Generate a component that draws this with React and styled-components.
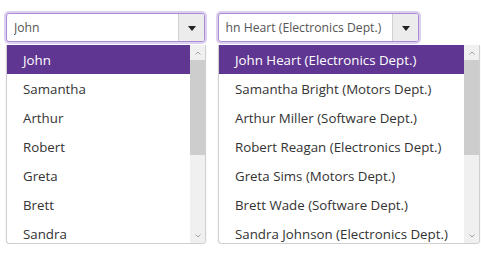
import React from "react";
import styled, { createGlobalStyle } from "styled-components";

const Global = createGlobalStyle`
  html, body { margin: 0; padding: 0; background: #fff; }
  body { font-family: "Open Sans", "Noto Sans", sans-serif; }
`;

const Page = styled.div`
  display: flex;
  align-items: flex-start;
  gap: 12px;
  padding: 13px 0 0 6px;
`;

const Combo = styled.div`
  display: flex;
  flex-direction: column;
  width: ${(p) => p.$listWidth}px;
`;

const Input = styled.div`
  box-sizing: border-box;
  width: ${(p) => p.$width}px;
  height: 29px;
  display: flex;
  border: 1px solid #a98bd4;
  border-radius: 3px;
  box-shadow: 0 0 0 2px #ddd0ef;
  background: #fff;
  overflow: hidden;
`;

const InputText = styled.div`
  flex: 1;
  min-width: 0;
  display: flex;
  padding: 0 6px 0 7px;
`;

const Clip = styled.div`
  flex: 1;
  min-width: 0;
  display: flex;
  align-items: center;
  overflow: hidden;
  white-space: nowrap;
  font-size: 12.2px;
  color: #555;
`;

const ValueText = styled.span`
  flex: none;
  margin-left: ${(p) => -p.$scroll}px;
`;

const ArrowButton = styled.div`
  flex: none;
  width: 25px;
  display: flex;
  align-items: center;
  justify-content: center;
  background: #ececec;
  border-left: 1px solid #d0d0d0;
`;

const Caret = styled.span`
  width: 0;
  height: 0;
  border-left: 4px solid transparent;
  border-right: 4px solid transparent;
  border-top: 5px solid #222;
  margin-top: 1px;
`;

const Popup = styled.div`
  box-sizing: border-box;
  margin-top: 3px;
  height: 199px;
  display: flex;
  border: 1px solid #cfcfcf;
  border-top: none;
  border-radius: 0 0 4px 4px;
  background: #fff;
  overflow: hidden;
  box-shadow: 0 1px 2px rgba(0, 0, 0, 0.08);
`;

const List = styled.ul`
  list-style: none;
  margin: 0;
  padding: 0;
  flex: 1;
  min-width: 0;
  overflow: hidden;
`;

const Item = styled.li`
  height: 29px;
  display: flex;
  align-items: center;
  padding-left: 16px;
  white-space: nowrap;
  font-size: 13.3px;
  color: ${(p) => (p.$selected ? "#fff" : "#333")};
  background: ${(p) => (p.$selected ? "#5f3692" : "transparent")};
`;

const Scrollbar = styled.div`
  flex: none;
  width: ${(p) => p.$w}px;
  display: flex;
  flex-direction: column;
  background: #f0f0f0;
`;

const ScrollArrow = styled.div`
  height: 15px;
  display: flex;
  align-items: center;
  justify-content: center;
  color: #a3a3a3;
`;

const Thumb = styled.div`
  height: 95px;
  background: #cdcdcd;
`;

const Spacer = styled.div`
  flex: 1;
`;

const Chevron = ({ up }) => (
  <svg width="6" height="4" viewBox="0 0 6 4">
    <path
      d={up ? "M0.5 3.5 L3 1 L5.5 3.5" : "M0.5 0.5 L3 3 L5.5 0.5"}
      fill="none"
      stroke="currentColor"
      strokeWidth="1"
    />
  </svg>
);

const names = [
  ["John", "John Heart (Electronics Dept.)"],
  ["Samantha", "Samantha Bright (Motors Dept.)"],
  ["Arthur", "Arthur Miller (Software Dept.)"],
  ["Robert", "Robert Reagan (Electronics Dept.)"],
  ["Greta", "Greta Sims (Motors Dept.)"],
  ["Brett", "Brett Wade (Software Dept.)"],
  ["Sandra", "Sandra Johnson (Electronics Dept.)"],
];

function ComboBox({ items, value, inputWidth, listWidth, barWidth, scroll = 0 }) {
  return (
    <Combo $listWidth={listWidth}>
      <Input $width={inputWidth}>
        <InputText>
          <Clip>
            <ValueText $scroll={scroll}>{value}</ValueText>
          </Clip>
        </InputText>
        <ArrowButton>
          <Caret />
        </ArrowButton>
      </Input>
      <Popup>
        <List>
          {items.map((t, i) => (
            <Item key={t} $selected={i === 0}>
              {t}
            </Item>
          ))}
        </List>
        <Scrollbar $w={barWidth}>
          <ScrollArrow>
            <Chevron up />
          </ScrollArrow>
          <Thumb />
          <Spacer />
          <ScrollArrow>
            <Chevron />
          </ScrollArrow>
        </Scrollbar>
      </Popup>
    </Combo>
  );
}

export default function App() {
  return (
    <>
      <Global />
      <Page>
        <ComboBox
          items={names.map((n) => n[0])}
          value="John"
          inputWidth={199}
          listWidth={200}
          barWidth={15}
        />
        <ComboBox
          items={names.map((n) => n[1])}
          value="John Heart (Electronics Dept.)"
          inputWidth={201}
          listWidth={262}
          barWidth={15}
          scroll={11}
        />
      </Page>
    </>
  );
}
